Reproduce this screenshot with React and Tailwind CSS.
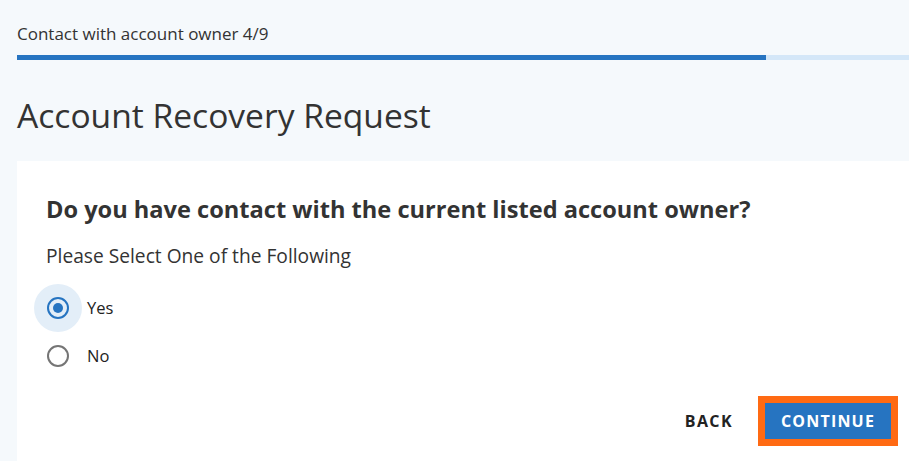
import React, { useState } from 'react';

const Radio = ({ checked, label, onClick }) => (
  <label className="flex items-center cursor-pointer" onClick={onClick}>
    <span
      className={`flex items-center justify-center w-12 h-12 rounded-full ${
        checked ? 'bg-[#e3eef8]' : ''
      }`}
    >
      <span
        className={`flex items-center justify-center w-[22px] h-[22px] rounded-full border-2 ${
          checked ? 'border-[#2674c1]' : 'border-[#757575]'
        }`}
      >
        {checked && <span className="w-[10px] h-[10px] rounded-full bg-[#2674c1]" />}
      </span>
    </span>
    <span className="ml-[5px] text-[16.5px] text-[#222]">{label}</span>
  </label>
);

const App = () => {
  const [answer, setAnswer] = useState('yes');

  return (
    <div
      className="min-h-screen bg-[#f5f9fc] pl-[17px] text-[#333] overflow-hidden"
      style={{ fontFamily: '"Open Sans", "Noto Sans", sans-serif' }}
    >
      {/* step label + progress */}
      <div className="pt-[23px] text-[17px] leading-[22px] text-[#333]">Contact with account owner 4/9</div>
      <div className="mt-[10px] h-[5px] bg-[#d4e7f8]">
        <div className="h-full w-[749px] bg-[#2674c1]" />
      </div>

      <h1 className="mt-[33px] text-[33.6px] leading-[44px] text-[#333]">Account Recovery Request</h1>

      {/* card */}
      <div className="mt-[24px] bg-white pl-[29px] pr-[18px] pt-[32px] pb-[24px]">
        <h2 className="text-[23.6px] leading-[32px] font-bold text-[#333]">
          Do you have contact with the current listed account owner?
        </h2>
        <p className="mt-[18px] text-[19.2px] leading-[26px] text-[#333]">Please Select One of the Following</p>

        <div className="mt-[15px] -ml-[12px] flex flex-col">
          <Radio checked={answer === 'yes'} label="Yes" onClick={() => setAnswer('yes')} />
          <Radio checked={answer === 'no'} label="No" onClick={() => setAnswer('no')} />
        </div>

        <div className="mt-[23px] flex items-center justify-end">
          <button className="mr-[32px] text-[16px] font-bold tracking-[1.4px] text-[#222]">BACK</button>
          <button className="h-[36px] w-[126px] bg-[#2674c1] text-[16px] font-bold tracking-[1.2px] text-white outline-[7px] outline-solid outline-[#ff6a13]">
            CONTINUE
          </button>
        </div>
      </div>
    </div>
  );
};

export default App;
